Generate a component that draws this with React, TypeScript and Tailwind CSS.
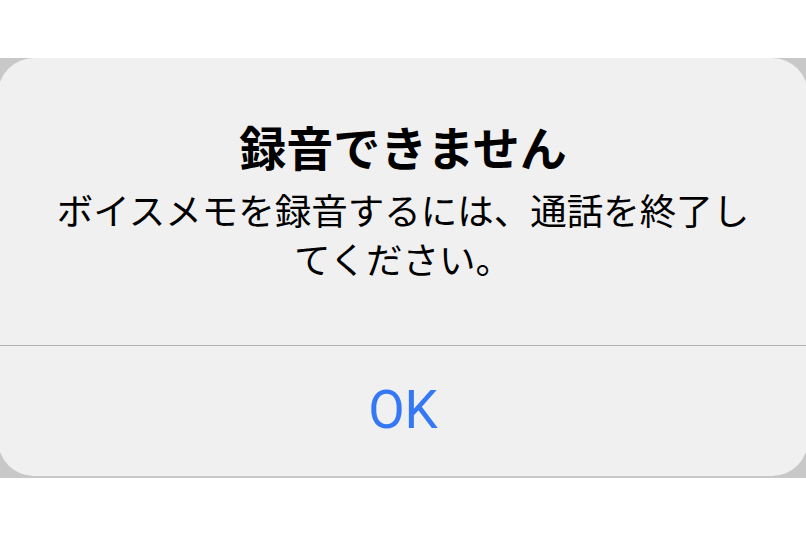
export default function App() {
  return (
    <div className="h-[537px] w-[806px] overflow-hidden bg-white pt-[58px]">
      <div className="h-[420px] bg-[#c8c8c8]">
        <div className="-mx-[2px] flex h-[418px] flex-col rounded-[36px] bg-[#f0f0f0]">
          <div className="flex h-[287px] flex-col items-center px-[48px] pt-[58px] text-center text-black [font-family:'Noto_Sans_CJK_JP',sans-serif]">
            <h1 className="text-[47px] font-bold leading-[60px]">録音できません</h1>
            <p className="mt-[9px] text-[36.5px] font-normal leading-[49px]">
              ボイスメモを録音するには、通話を終了してください。
            </p>
          </div>
          <div className="h-px bg-[#b3b3b3]" />
          <button className="flex flex-1 items-center justify-center pb-[2px] text-[53px] leading-none text-[#3478f6] [font-family:Roboto,'Liberation_Sans',sans-serif]">
            OK
          </button>
        </div>
      </div>
    </div>
  )
}
